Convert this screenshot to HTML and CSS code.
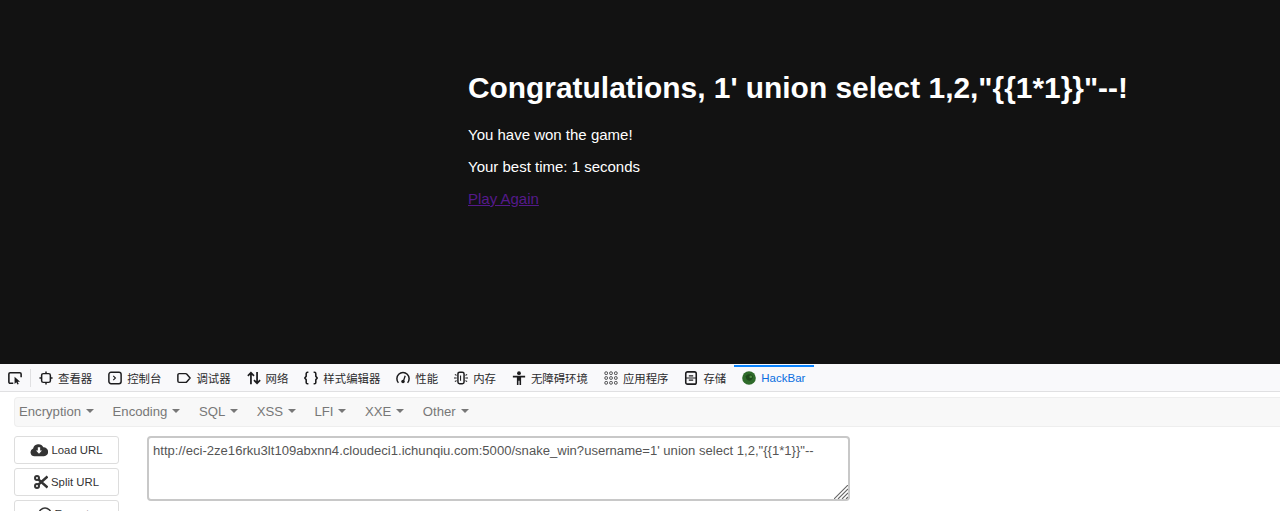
FILE: index.html
```html
<!DOCTYPE html>
<html lang="zh">
<head>
<meta charset="utf-8">
<title>Snake win</title>
<link rel="stylesheet" href="styles.css">
</head>
<body>
<main class="page">
  <h1 class="title">Congratulations, 1' union select 1,2,"{{1*1}}"--!</h1>
  <p class="line">You have won the game!</p>
  <p class="line">Your best time: 1 seconds</p>
  <p class="line"><a class="again" href="#again">Play Again</a></p>
</main>
<section class="devtools">
  <nav class="tabs">
    <span class="picker">
      <svg class="ico" viewBox="0 0 16 16"><path d="M6 14H2.500A1.500 1.500 0 0 1 1 12.500V3.500A1.500 1.500 0 0 1 2.500 2h11A1.500 1.500 0 0 1 15 3.500V7" fill="none" stroke="#1c1c1e" stroke-width="1.800"/><path d="M7.500 6.500v8.300l2-2 1.300 2.700 1.500-.7-1.300-2.600h2.800z" fill="#1c1c1e"/></svg>
    </span>
    <span class="tab">
      <svg class="ico" viewBox="0 0 16 16"><rect x="3" y="3" width="10" height="10" rx="2" fill="none" stroke="#1c1c1e" stroke-width="1.700"/><path d="M8 .5V3M8 13v2.500M.5 8H3M13 8h2.500" stroke="#1c1c1e" stroke-width="1.700"/></svg>查看器
    </span>
    <span class="tab">
      <svg class="ico" viewBox="0 0 16 16"><rect x="1" y="1.500" width="14" height="13" rx="2.500" fill="none" stroke="#1c1c1e" stroke-width="1.700"/><path d="M6 5.500 8.500 8 6 10.500" fill="none" stroke="#1c1c1e" stroke-width="1.300"/></svg>控制台
    </span>
    <span class="tab">
      <svg class="ico" viewBox="0 0 16 16"><path d="M2.500 3h7.300a2 2 0 0 1 1.500.7L15 8l-3.700 4.300a2 2 0 0 1-1.500.7H2.500A1.500 1.500 0 0 1 1 11.500v-7A1.500 1.500 0 0 1 2.500 3z" fill="none" stroke="#1c1c1e" stroke-width="1.700"/></svg>调试器
    </span>
    <span class="tab">
      <svg class="ico" viewBox="0 0 16 16"><path d="M4.500 15V2M1 5.500 4.500 2 8 5.500M11.500 1v13M8 10.500l3.500 3.500 3.500-3.500" fill="none" stroke="#1c1c1e" stroke-width="2"/></svg>网络
    </span>
    <span class="tab">
      <svg class="ico" viewBox="0 0 16 16"><path d="M5 1.500H4A1.500 1.500 0 0 0 2.500 3v3L1 8l1.500 2v3A1.500 1.500 0 0 0 4 14.500h1M11 1.500h1A1.500 1.500 0 0 1 13.500 3v3L15 8l-1.500 2v3a1.500 1.500 0 0 1-1.500 1.500h-1" fill="none" stroke="#1c1c1e" stroke-width="1.800"/></svg>样式编辑器
    </span>
    <span class="tab">
      <svg class="ico" viewBox="0 0 16 16"><path d="M2.800 13.500A7 7 0 1 1 13.200 13.500" fill="none" stroke="#1c1c1e" stroke-width="1.700"/><path d="M10.500 5.500 8.800 10.500" stroke="#1c1c1e" stroke-width="1.500"/><circle cx="8" cy="12" r="2" fill="#1c1c1e"/></svg>性能
    </span>
    <span class="tab">
      <svg class="ico" viewBox="0 0 16 16"><rect x="4.500" y="1.500" width="7" height="13" rx="2" fill="none" stroke="#1c1c1e" stroke-width="1.700"/><path d="M7.500 5v6M1 4l2 1M0 8h3M1 12l2-1M15 4l-2 1M16 8h-3M15 12l-2-1" fill="none" stroke="#1c1c1e" stroke-width="1.200"/></svg>内存
    </span>
    <span class="tab">
      <svg class="ico" viewBox="0 0 16 16"><circle cx="8" cy="2.500" r="2.200" fill="#1c1c1e"/><path d="M1 5.500h14v2h-4.600V16H8.600v-5H7.400v5H5.600V7.500H1z" fill="#1c1c1e"/></svg>无障碍环境
    </span>
    <span class="tab">
      <svg class="ico" viewBox="0 0 16 16"><g fill="none" stroke="#3a3a3c" stroke-width="1.100"><rect x="1" y="1" width="3" height="3" rx="1"/><rect x="6.500" y="1" width="3" height="3" rx="1"/><rect x="12" y="1" width="3" height="3" rx="1"/><rect x="1" y="6.500" width="3" height="3" rx="1"/><rect x="6.500" y="6.500" width="3" height="3" rx="1"/><rect x="12" y="6.500" width="3" height="3" rx="1"/><rect x="1" y="12" width="3" height="3" rx="1"/><rect x="6.500" y="12" width="3" height="3" rx="1"/><rect x="12" y="12" width="3" height="3" rx="1"/></g></svg>应用程序
    </span>
    <span class="tab">
      <svg class="ico" viewBox="0 0 16 16"><rect x="2" y="1" width="12" height="14" rx="2" fill="none" stroke="#1c1c1e" stroke-width="1.800"/><path d="M5.500 5.500h5M2 8h12M5.500 10.500h5" stroke="#1c1c1e" stroke-width="1.400"/></svg>存储
    </span>
    <span class="tab tab-active">
      <svg class="ico" viewBox="0 0 16 16"><circle cx="8" cy="8" r="7.800" fill="#2f6b2a"/><path d="M4 6c2-3 6-3 8-1 1 2 0 5-3 6-2 0-3-1-4-2z" fill="#1f4a1c"/><circle cx="10" cy="6.500" r="1.500" fill="#4e8f3f"/></svg>HackBar
    </span>
  </nav>
  <div class="menu">
    <span class="menu-item">Encryption<i class="caret"></i></span>
    <span class="menu-item">Encoding<i class="caret"></i></span>
    <span class="menu-item">SQL<i class="caret"></i></span>
    <span class="menu-item">XSS<i class="caret"></i></span>
    <span class="menu-item">LFI<i class="caret"></i></span>
    <span class="menu-item">XXE<i class="caret"></i></span>
    <span class="menu-item">Other<i class="caret"></i></span>
  </div>
  <div class="work">
    <div class="buttons">
      <button class="btn" type="button">
        <svg class="btn-ico cloud" viewBox="0 0 20 15"><path d="M5 14.500A4.500 4.500 0 0 1 3.500 5.800 6 6 0 0 1 14.800 4.500 5 5 0 0 1 15.500 14.500z" fill="#333"/><path d="M8.700 4.500h2.600v3.600h2L10 11.800 6.700 8.100h2z" fill="#fff"/></svg>Load URL
      </button>
      <button class="btn" type="button">
        <svg class="btn-ico scissors" viewBox="0 0 14 14"><circle cx="3" cy="3" r="2" fill="none" stroke="#333" stroke-width="2"/><circle cx="3" cy="11" r="2" fill="none" stroke="#333" stroke-width="2"/><path d="M4.500 4.500 13.500 12.500M4.500 9.500 13.500 1.500" stroke="#333" stroke-width="2.400"/></svg>Split URL
      </button>
      <button class="btn" type="button">
        <svg class="btn-ico play" viewBox="0 0 14 14"><circle cx="7" cy="7" r="6" fill="none" stroke="#333" stroke-width="1.500"/><path d="M5.500 4 10 7 5.500 10z" fill="#333"/></svg>Execute
      </button>
    </div>
    <div class="url-box">
      <textarea class="url" spellcheck="false">http://eci-2ze16rku3lt109abxnn4.cloudeci1.ichunqiu.com:5000/snake_win?username=1' union select 1,2,"{{1*1}}"--</textarea>
      <svg class="grip" viewBox="0 0 14 14"><path d="M14 0 0 14M14 4 4 14M14 8 8 14M14 12 12 14" stroke="#666" stroke-width="1.100"/></svg>
    </div>
  </div>
</section>
</body>
</html>
```
FILE: styles.css
```css
* { box-sizing: border-box; }
html, body {
  margin: 0;
  height: 511px;
  overflow: hidden;
  background: #fff;
  font-family: "Liberation Sans", Arial, sans-serif;
}
.page {
  height: 364px;
  background: #121212;
  color: #fff;
  padding: 71px 0 0 468px;
  font-size: 15px;
  line-height: 17px;
}
.title {
  margin: 0 0 21px;
  font-size: 29.900px;
  line-height: 34px;
  font-weight: 700;
  white-space: nowrap;
}
.line { margin: 0 0 15px; }
.again { color: #551a8b; }
.devtools { height: 147px; overflow: hidden; background: #fff; }
.tabs {
  display: flex;
  align-items: center;
  height: 28px;
  background: #f9f9fb;
  border-bottom: 1px solid #e0e0e2;
  font-family: "Noto Sans CJK SC", "Liberation Sans", sans-serif;
  font-size: 11.400px;
  color: #2b2b2d;
  padding-left: 8px;
}
.picker {
  display: flex;
  align-items: center;
  height: 18px;
  padding-right: 8px;
  border-right: 1px solid #e0e0e2;
}
.ico { width: 14px; height: 14px; flex: none; }
.tab {
  display: flex;
  align-items: center;
  gap: 5px;
  height: 27px;
  padding: 0 8px;
  white-space: nowrap;
}
.tab-active {
  align-self: flex-end;
  height: 26px;
  padding-right: 9px;
  color: #0a6ee0;
  box-shadow: inset 0 2px 0 #0a84ff;
  font-family: "Liberation Sans", sans-serif;
  font-size: 11.500px;
}
.menu {
  display: flex;
  gap: 18.500px;
  height: 30px;
  margin: 5px 0 0 14px;
  padding: 0 4px 2px;
  align-items: center;
  background: #f8f8f8;
  border: 1px solid #eeeeee;
  border-right: 0;
  border-radius: 4px 0 0 4px;
  color: #777;
  font-size: 13.150px;
}
.menu-item { display: flex; align-items: center; white-space: nowrap; }
.caret {
  width: 0;
  height: 0;
  margin-left: 5px;
  border-top: 4px solid #777;
  border-left: 4px solid transparent;
  border-right: 4px solid transparent;
}
.work {
  display: flex;
  gap: 28px;
  margin: 9px 0 0 14px;
}
.buttons { display: flex; flex-direction: column; gap: 4px; width: 105px; flex: none; }
.btn {
  display: flex;
  align-items: center;
  justify-content: center;
  gap: 3px;
  height: 28px;
  padding: 0;
  background: #fff;
  border: 1px solid #ddd;
  border-radius: 3px;
  color: #333;
  font-family: "Liberation Sans", sans-serif;
  font-size: 11.350px;
}
.btn-ico { flex: none; }
.cloud { width: 18px; height: 14px; }
.scissors { width: 14px; height: 14px; }
.play { width: 14px; height: 14px; }
.url-box { position: relative; width: 703px; height: 65px; }
.url {
  display: block;
  width: 100%;
  height: 100%;
  padding: 5px 4px;
  border: 2px solid #c8c8c8;
  border-radius: 4px;
  outline: 0;
  resize: none;
  color: #555;
  font-family: "Liberation Sans", sans-serif;
  font-size: 13.090px;
  line-height: 16px;
  background: #fff;
}
.grip {
  position: absolute;
  right: 2px;
  bottom: 2px;
  width: 14px;
  height: 14px;
}
```
